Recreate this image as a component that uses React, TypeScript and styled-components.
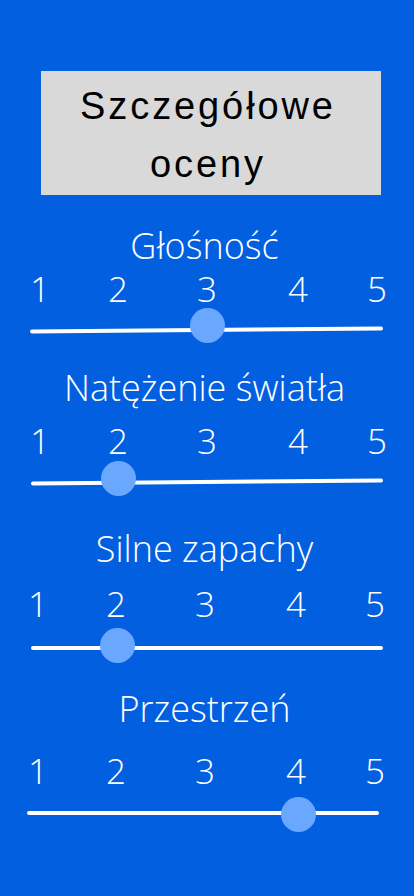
import React from "react";
import styled, { createGlobalStyle } from "styled-components";

const Global = createGlobalStyle`
  html, body { margin: 0; padding: 0; background: #0260e0; }
  body { font-family: "Open Sans", "Liberation Sans", sans-serif; }
`;

const Page = styled.div`
  width: 414px;
  min-height: 896px;
  background: #0260e0;
  padding-top: 71px;
  box-sizing: border-box;
  display: flex;
  flex-direction: column;
`;

const Header = styled.div`
  margin-left: 41px;
  width: 340px;
  height: 124px;
  box-sizing: border-box;
  padding-top: 6px;
  padding-right: 6px;
  background: #d9d9d9;
  color: #000;
  font-family: "Liberation Sans", Arial, sans-serif;
  font-size: 38px;
  line-height: 58px;
  letter-spacing: 2.9px;
  text-align: center;
`;

const Section = styled.section<{ $top: number }>`
  margin-top: ${(p) => p.$top}px;
  display: flex;
  flex-direction: column;
  color: #fff;
`;

const Title = styled.h2`
  margin: 0;
  padding-right: 5px;
  font-family: "Open Sans", sans-serif;
  font-weight: 300;
  font-size: 36px;
  line-height: 40px;
  text-align: center;
`;

const Scale = styled.div<{ $gap: number; $shift: number }>`
  margin-top: ${(p) => p.$gap}px;
  margin-left: ${(p) => 4 + p.$shift}px;
  display: grid;
  grid-template-columns: 72px 84px 94px 88px 70px;
  font-family: "Open Sans", sans-serif;
  font-weight: 300;
  font-size: 35px;
  line-height: 40px;
`;

const Num = styled.span`
  text-align: center;
`;

const SliderArea = styled.div`
  position: relative;
  height: 40px;
`;

const Track = styled.div<{ $top: number; $left: number; $right: number; $tilt: number }>`
  margin-top: ${(p) => p.$top}px;
  margin-left: ${(p) => p.$left}px;
  width: ${(p) => p.$right - p.$left}px;
  height: 4px;
  border-radius: 2px;
  background: #fff;
  transform: rotate(${(p) => p.$tilt}deg);
`;

const Thumb = styled.div`
  position: absolute;
  width: 35px;
  height: 35px;
  border-radius: 50%;
  background: #6aa8ff;
`;

type Rating = {
  title: string;
  top: number;
  gap: number;
  shift: number;
  trackTop: number;
  left: number;
  right: number;
  tilt: number;
  thumbX: number;
  thumbY: number;
};

const ratings: Rating[] = [
  { title: "Głośność", top: 31, gap: 3, shift: 0, trackTop: 19, left: 30, right: 383, tilt: -0.5, thumbX: 207, thumbY: 16.6 },
  { title: "Natężenie światła", top: 19, gap: 13, shift: 0, trackTop: 19, left: 31, right: 383, tilt: -0.5, thumbX: 118, thumbY: 17.6 },
  { title: "Silne zapachy", top: 28, gap: 15, shift: -2, trackTop: 21.6, left: 31, right: 383, tilt: 0, thumbX: 117, thumbY: 21.6 },
  { title: "Przestrzeń", top: 25, gap: 22, shift: -2, trackTop: 19.6, left: 27, right: 379, tilt: 0, thumbX: 298, thumbY: 23.6 },
];

export default function App() {
  return (
    <>
      <Global />
      <Page>
        <Header>
          Szczegółowe
          <br />
          oceny
        </Header>
        {ratings.map((r) => (
          <Section key={r.title} $top={r.top}>
            <Title>{r.title}</Title>
            <Scale $gap={r.gap} $shift={r.shift}>
              {[1, 2, 3, 4, 5].map((n) => (
                <Num key={n}>{n}</Num>
              ))}
            </Scale>
            <SliderArea>
              <Track $top={r.trackTop} $left={r.left} $right={r.right} $tilt={r.tilt} />
              <Thumb style={{ left: r.thumbX - 17.5, top: r.thumbY - 17.5 }} />
            </SliderArea>
          </Section>
        ))}
      </Page>
    </>
  );
}
